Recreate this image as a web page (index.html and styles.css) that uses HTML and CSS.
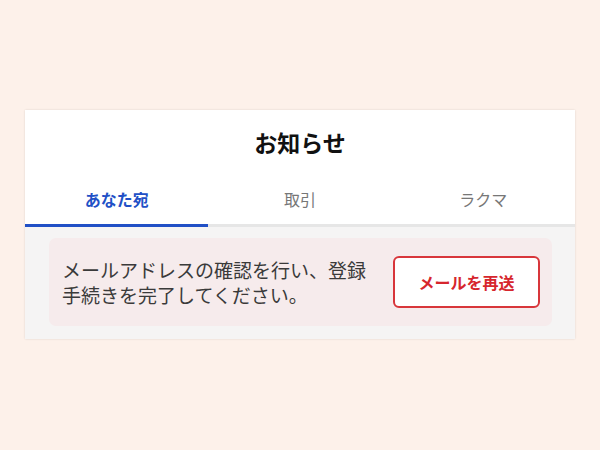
FILE: index.html
```html
<!DOCTYPE html>
<html lang="ja">
<head>
<meta charset="utf-8">
<link rel="stylesheet" href="styles.css">
</head>
<body>
<div class="page">
  <div class="card">
    <div class="title">お知らせ</div>
    <div class="tabs">
      <div class="tab active">あなた宛</div>
      <div class="tab">取引</div>
      <div class="tab">ラクマ</div>
    </div>
    <div class="body">
      <div class="notice">
        <p class="msg">メールアドレスの確認を行い、登録手続きを完了してください。</p>
        <button class="resend">メールを再送</button>
      </div>
    </div>
  </div>
</div>
</body>
</html>
```
FILE: styles.css
```css
html, body {
  margin: 0;
  padding: 0;
}
body {
  background: #fdf1ea;
  font-family: "Noto Sans CJK JP", "Noto Sans", sans-serif;
  width: 600px;
  height: 450px;
}
.page {
  padding: 110px 25px 0 25px;
}
.card {
  background: #ffffff;
  box-shadow: 0 0 2px rgba(0, 0, 0, 0.12);
}
.title {
  height: 64px;
  line-height: 64px;
  text-align: center;
  font-size: 23px;
  font-weight: 700;
  color: #111;
}
.tabs {
  display: flex;
  border-bottom: 3px solid #e6e6e6;
}
.tab {
  flex: 1;
  text-align: center;
  height: 50px;
  line-height: 50px;
  font-size: 16px;
  color: #777;
  margin-bottom: -3px;
  border-bottom: 3px solid transparent;
}
.tab.active {
  color: #2150c6;
  font-weight: 700;
  border-bottom-color: #2150c6;
}
.body {
  background: #f5f4f4;
  padding: 11px 23px 13px 24px;
}
.notice {
  background: #f6ebec;
  border-radius: 7px;
  height: 88px;
  box-sizing: border-box;
  padding: 0 12px 0 13px;
  display: flex;
  align-items: center;
  justify-content: space-between;
}
.msg {
  margin: 0;
  width: 310px;
  font-size: 19px;
  line-height: 25px;
  color: #3a3a3a;
}
.resend {
  width: 147px;
  height: 52px;
  background: #fff;
  border: 2px solid #d8363b;
  border-radius: 6px;
  color: #d6262d;
  font-family: inherit;
  font-size: 16px;
  font-weight: 700;
  padding: 0;
}
```
